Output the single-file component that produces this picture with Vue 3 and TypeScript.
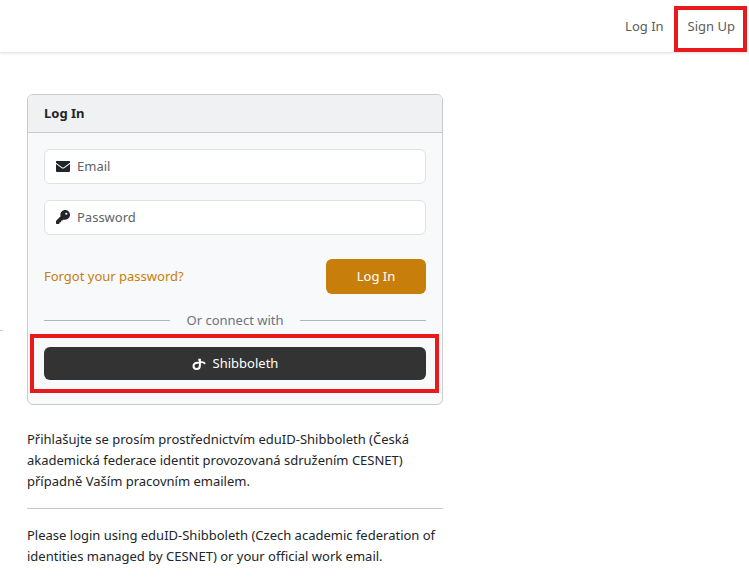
<script setup lang="ts">
import { ref } from 'vue'

const email = ref('')
const password = ref('')
</script>

<template>
  <div class="page">
    <header class="navbar">
      <nav class="nav">
        <a class="nav-link" href="#login">Log In</a>
        <a class="nav-link marked marked-nav" href="#signup">Sign Up</a>
      </nav>
    </header>

    <main class="content">
      <aside class="side">
        <hr class="rule side-rule" />
      </aside>

      <div class="column">
        <section class="card">
          <h1 class="card-header">Log In</h1>
          <form class="card-body" @submit.prevent>
            <label class="field">
              <svg class="icon" viewBox="0 0 14 14" aria-hidden="true">
                <path d="M0.500 2H13.500Q14 2 14 2.500V3.800L7.900 8.200Q7 8.800 6.100 8.200L0 3.800V2.500Q0 2 0.500 2ZM0 5.100L5.500 9.100Q7 10.100 8.500 9.100L14 5.100V12Q14 13 13 13H1Q0 13 0 12Z" />
              </svg>
              <input v-model="email" type="email" placeholder="Email" aria-label="Email" />
            </label>
            <label class="field">
              <svg class="icon" viewBox="0 0 512 512" aria-hidden="true">
                <path d="M336 352c97.200 0 176-78.800 176-176S433.200 0 336 0S160 78.800 160 176c0 18.700 2.900 36.800 8.300 53.700L7 391c-4.500 4.500-7 10.600-7 17v80c0 13.300 10.700 24 24 24h80c13.300 0 24-10.700 24-24V448h40c13.300 0 24-10.700 24-24V384h40c6.400 0 12.500-2.500 17-7l33.300-33.300c16.900 5.400 35 8.300 53.700 8.300zM376 96a40 40 0 1 1 0 80 40 40 0 1 1 0-80z" />
              </svg>
              <input v-model="password" type="password" placeholder="Password" aria-label="Password" />
            </label>

            <div class="actions">
              <a class="forgot" href="#reset">Forgot your password?</a>
              <button class="btn btn-primary" type="submit">Log In</button>
            </div>

            <div class="divider">Or connect with</div>

            <div class="marked marked-provider">
              <button class="btn btn-dark" type="button">
                <svg class="provider-icon" viewBox="0 0 14 14" aria-hidden="true">
                  <path d="M6.500 5.700C3.500 5.300 1.500 6.700 1.500 9C1.500 11 2.900 12 4.600 12C6.800 12 7.900 10.600 7.900 8.500V1.800M6.300 2.700H8M6.500 6.300C8.700 4.700 11.500 4.900 13 6.900" />
                </svg>
                Shibboleth
              </button>
            </div>
          </form>
        </section>

        <p class="note" lang="cs">
          Přihlašujte se prosím prostřednictvím eduID-Shibboleth (Česká akademická federace identit
          provozovaná sdružením CESNET) případně Vaším pracovním emailem.
        </p>
        <hr class="rule" />
        <p class="note" lang="en">
          Please login using eduID-Shibboleth (Czech academic federation of identities managed by
          CESNET) or your official work email.
        </p>
      </div>
    </main>
  </div>
</template>

<style>
body {
  background: #fff;
}
</style>

<style scoped>
.page,
.page * {
  box-sizing: border-box;
}

.page {
  color: #212529;
  font-family: 'Segoe UI', 'Noto Sans', 'Open Sans', sans-serif;
  font-size: 13px;
  line-height: 21px;
}

.navbar {
  height: 52px;
  display: flex;
  align-items: center;
  justify-content: flex-end;
  padding: 0 14px;
  box-shadow: 0 1px 3px rgba(0, 0, 0, 0.14);
}

.nav {
  display: flex;
  gap: 24px;
}

.nav-link {
  color: #5c5c5c;
  text-decoration: none;
}

.marked {
  position: relative;
}

.marked::after {
  content: '';
  position: absolute;
  border: 4px solid #e81a1c;
  pointer-events: none;
}

.marked-nav::after {
  inset: -10px -12px -15px -14px;
}

.marked-provider::after {
  inset: -13px -13px -13px -14px;
}

.content {
  display: grid;
  grid-template-columns: 3px minmax(0, 416px);
  column-gap: 24px;
  padding: 42px 16px 16px 0;
}

.side {
  padding-top: 236px;
}

.rule {
  margin: 16px 0;
  border: 0;
  border-top: 1px solid #c8c9ca;
}

.side-rule {
  margin: 0;
}

.card {
  margin-bottom: 24px;
  border: 1px solid #c8cacd;
  border-radius: 6px;
  background: #f8f9fb;
}

.card-header {
  margin: 0;
  padding: 8px 16px;
  border-bottom: 1px solid #c8cacd;
  border-radius: 5px 5px 0 0;
  background: #f0f1f3;
  font-size: 13px;
  font-weight: 700;
  line-height: 21px;
}

.card-body {
  padding: 16px 16px 24px;
}

.field {
  height: 35px;
  display: flex;
  align-items: center;
  gap: 7px;
  margin-bottom: 16px;
  padding: 0 11px;
  border: 1px solid #dee2e6;
  border-radius: 6px;
  background: #fff;
}

.field:focus-within {
  border-color: #c77e0a;
}

.icon {
  width: 14px;
  height: 14px;
  flex: none;
  margin-bottom: 2px;
  fill: #212529;
}

.field input {
  min-width: 0;
  flex: 1;
  padding: 0;
  border: 0;
  outline: 0;
  background: transparent;
  color: inherit;
  font: inherit;
}

.field input::placeholder {
  color: #5f6468;
  opacity: 1;
}

.actions {
  display: flex;
  align-items: center;
  justify-content: space-between;
  margin: 24px 0 16px;
}

.forgot {
  color: #c77e0a;
  text-decoration: none;
}

.btn {
  border: 0;
  border-radius: 6px;
  color: #fff;
  font: inherit;
  cursor: pointer;
}

.btn-primary {
  width: 100px;
  height: 35px;
  background: #c77e0a;
}

.divider {
  display: flex;
  align-items: center;
  gap: 16px;
  margin-bottom: 16px;
  color: #6c757d;
}

.divider::before,
.divider::after {
  content: '';
  height: 1px;
  flex: 1;
  background: #adb5bd;
}

.btn-dark {
  width: 100%;
  height: 33px;
  display: flex;
  align-items: center;
  justify-content: center;
  gap: 7px;
  background: #333;
}

.provider-icon {
  width: 14px;
  height: 14px;
  fill: none;
  stroke: #fff;
  stroke-width: 2;
}

.note {
  margin: 0;
}
</style>
